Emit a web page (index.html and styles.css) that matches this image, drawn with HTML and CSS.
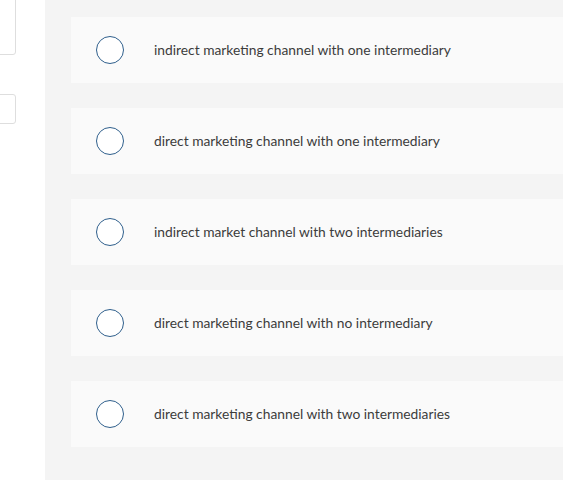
FILE: index.html
```html
<!DOCTYPE html>
<html>
<head>
<meta charset="utf-8">
<link rel="stylesheet" href="styles.css">
</head>
<body>
<div class="page">
  <aside class="side">
    <div class="field field-one"></div>
    <div class="field field-two"></div>
  </aside>
  <main class="panel">
    <label class="option"><span class="radio"></span><span class="label">indirect marketing channel with one intermediary</span></label>
    <label class="option"><span class="radio"></span><span class="label">direct marketing channel with one intermediary</span></label>
    <label class="option"><span class="radio"></span><span class="label">indirect market channel with two intermediaries</span></label>
    <label class="option"><span class="radio"></span><span class="label">direct marketing channel with no intermediary</span></label>
    <label class="option"><span class="radio"></span><span class="label">direct marketing channel with two intermediaries</span></label>
  </main>
</div>
</body>
</html>
```

FILE: styles.css
```css
html, body {
  margin: 0;
  padding: 0;
  background: #ffffff;
  overflow: hidden;
}
.page {
  display: flex;
  width: 563px;
  height: 480px;
  font-family: "Lato", "Open Sans", sans-serif;
}
.side {
  width: 45px;
  flex: none;
  display: flex;
  flex-direction: column;
  overflow: hidden;
}
.field {
  width: 40px;
  margin-left: -24px;
  border: 1px solid #dedede;
  border-radius: 3px;
  box-sizing: border-box;
  background: #fff;
}
.field-one {
  height: 60px;
  margin-top: -5px;
}
.field-two {
  height: 30px;
  margin-top: 39px;
}
.panel {
  flex: 1;
  background: #f4f4f4;
  padding: 17px 0 0 26px;
  display: flex;
  flex-direction: column;
  gap: 25px;
}
.option {
  height: 66px;
  background: #fafafa;
  display: flex;
  align-items: center;
  padding-left: 25px;
  gap: 30px;
  cursor: pointer;
}
.radio {
  width: 28px;
  height: 28px;
  box-sizing: border-box;
  border: 1.6px solid #2f5f8c;
  border-radius: 50%;
  background: #fff;
  flex: none;
}
.label {
  font-size: 13.8px;
  line-height: 16px;
  margin-top: -1px;
  color: #3c3c3c;
}
```
